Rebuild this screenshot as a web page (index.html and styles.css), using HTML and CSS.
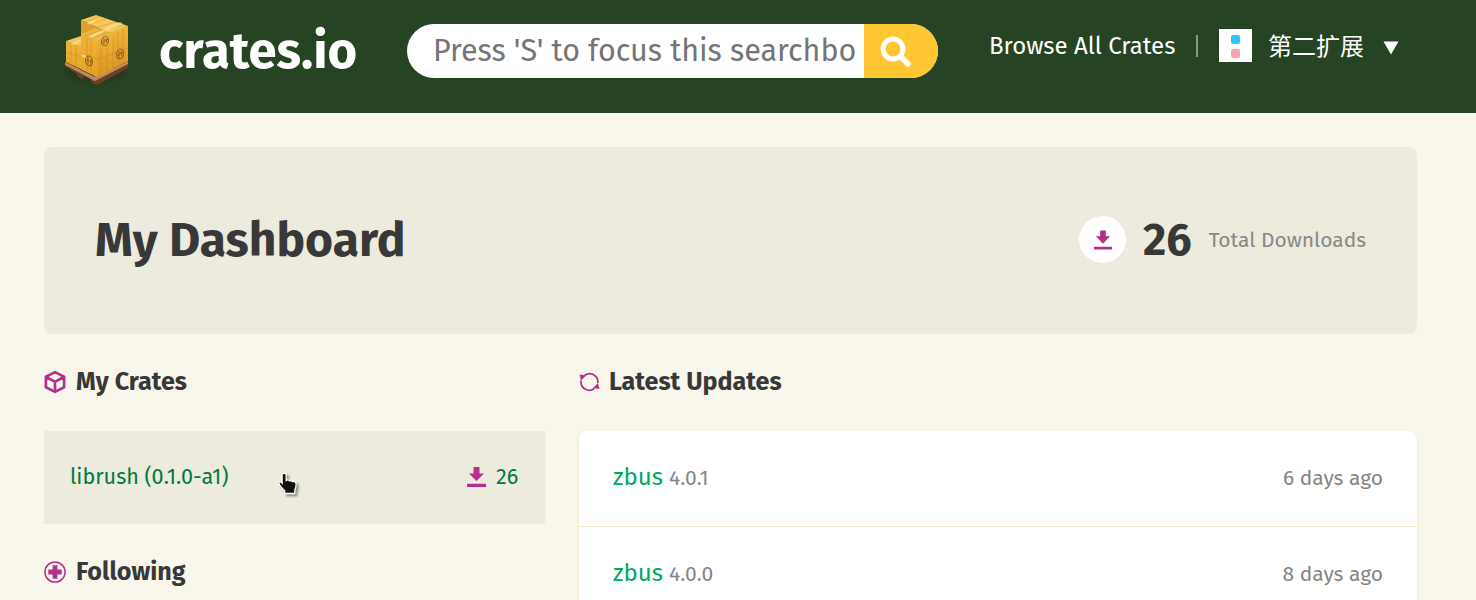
FILE: index.html
```html
<!DOCTYPE html>
<html lang="en">
<head>
<meta charset="utf-8">
<title>My Dashboard - crates.io</title>
<link rel="stylesheet" href="styles.css">
</head>
<body>
<header class="header">
  <a class="brand">
    <svg class="brand-logo" width="70" height="76" viewBox="0 0 70 76">
      <defs>
        <linearGradient id="wood" x1="0" y1="0" x2="0" y2="1"><stop offset="0" stop-color="#f0b43a"/><stop offset="1" stop-color="#e5a128"/></linearGradient>
        <linearGradient id="side" x1="0" y1="0" x2="0" y2="1"><stop offset="0" stop-color="#f0b63e"/><stop offset="1" stop-color="#d9941f"/></linearGradient>
        <filter id="soft" x="-30%" y="-60%" width="160%" height="220%"><feGaussianBlur stdDeviation="2"/></filter>
      </defs>
      <path d="M1 58 32 70 62 56 60 62 32 72 4 63z" fill="#14280f" opacity=".5" filter="url(#soft)"/>
      <path d="M2 51 32 66 65 50V56L34 73 31 72 28 70 27 67 21 64 20 67 15 65 14 62 2 54z" fill="#6b4022"/>
      <path d="M2 50 32 65 65 49v3L32 69 2 53z" fill="#c08a5c"/>
      <path d="M3 29 18 24 30 30 18 35z" fill="#f6c85c"/>
      <path d="M3 29 19 35 32 42V64L3 50z" fill="url(#wood)"/>
      <path d="M18 8 33 3 65 14 48 22z" fill="#f5c85c"/>
      <path d="M18 8 48 22V45L18 34z" fill="#e0a02c"/>
      <path d="M48 20 65 14V49L32 65V26z" fill="url(#side)"/>
      <path d="M18 22 33 16 50 23 34 30z" fill="#edb743"/>
      <path d="M18 22 34 29V65L18 57z" fill="url(#wood)"/>
      <path d="M34 29 50 22V57L34 65z" fill="url(#side)"/>
      <path d="M22 10 38 4M27 12 43 7M34 15 53 10M40 18 59 13M22 24 39 18M26 27 43 21M18 41 34 47 50 42 65 36M3 40 18 45M50 24V56M55 20V53M60 17V51M38 28V62M44 26V59M24 27V59M28 28V61M8 33V51M13 34V54" fill="none" stroke="#bd7716" stroke-width=".7" opacity=".45"/>
      <path d="M24 11 32 8 34 9 26 13zM25 24 42 17 45 18 29 26zM41 16 57 10 60 12 45 18zM8 32 15 28 18 29 12 33zM19 42 24 44 24 47 19 45z" fill="#ffe08d" opacity=".7"/>
      <g fill="none" stroke="#7d5216" stroke-width="1" opacity=".8"><ellipse cx="42" cy="29" rx="3.400" ry="4.800" transform="rotate(15 42 29)"/><path d="M39 31l6-4M41 26v7M43 26l1 5"/><ellipse cx="57" cy="42" rx="3.500" ry="5" transform="rotate(15 57 42)"/><path d="M54 44l6-4M56 39v7M58 39l1 5"/><ellipse cx="26" cy="49" rx="3.400" ry="5" transform="rotate(-15 26 49)"/><path d="M23 47l6 4M25 45v8M28 47v6"/></g>
    </svg>
    <span class="brand-name">crates.io</span>
  </a>
  <form class="search">
    <div class="search-input"><span class="search-text">Press 'S' to focus this searchbo</span></div>
    <div class="search-button">
      <svg width="32" height="32" viewBox="0 0 32 32" fill="none" stroke="#fff"><circle cx="13" cy="13" r="10" stroke-width="4.800"/><path d="M20.500 20.500 28 28" stroke-width="5.400" stroke-linecap="round"/></svg>
    </div>
  </form>
  <nav class="nav">
    <span class="browse">Browse All Crates</span>
    <span class="divider"></span>
    <svg class="avatar" width="33" height="33" viewBox="0 0 33 33"><path fill="#fff" d="M0 0h33v33H0z"/><rect x="12" y="6" width="9" height="9" rx="2" fill="#2ec5ff"/><rect x="12" y="20" width="9" height="9" rx="2" fill="#f9a3b4"/></svg>
    <span class="user">第二扩展</span>
    <svg class="caret" width="16" height="14" viewBox="0 0 16 14"><path d="M.5.5h15L8 13.500z" fill="#fff"/></svg>
  </nav>
</header>
<main class="main">
  <section class="hero">
    <h1 class="title">My Dashboard</h1>
    <div class="stats">
      <span class="stat-icon"><svg width="18" height="20" viewBox="0 0 19 20" fill="#b5308d"><path d="M6.500 0h6v6h4.500L9.500 14 2 6h4.500zM0 17h19v3H0z"/></svg></span>
      <span class="stat-num">26</span>
      <span class="stat-label">Total Downloads</span>
    </div>
  </section>
  <div class="columns">
    <aside class="side">
      <h2 class="heading">
        <svg class="heading-icon" width="22" height="24" viewBox="0 0 23 24" fill="none" stroke="#b5308d" stroke-width="2.800" stroke-linejoin="round"><path d="M11.500 1.700 21 6.500v11L11.500 22.300 2 17.500v-11zM2 6.800l9.500 5 9-5M11.500 11.800V22"/></svg>
        <span>My Crates</span>
      </h2>
      <a class="crate">
        <span class="crate-name">librush (0.1.0-a1)</span>
        <svg class="crate-icon" width="19" height="20" viewBox="0 0 19 20" fill="#b5308d"><path d="M6.500 0h6v6.500H17L9.500 14 2 6.500h4.500zM0 16.800h19V20H0z"/></svg>
        <span class="crate-count">26</span>
        <svg class="pointer" width="24" height="27" viewBox="0 0 24 27"><path d="M6 2.200c1.600 0 2.200 1 2.200 2.200v5c1-.8 2.500-.6 3.200.5 1-.7 2.400-.4 3 .7 1.300-.7 3.700.1 3.700 2.500 0 3-.6 4.500-1.300 6V22.500H6.700v-2.800C4 17.500 2.500 15 1 13c-.8-1.500 1-2.800 2.500-1.500l.6.700V4.400C4.100 3.200 4.600 2.200 6 2.200z" fill="#111" stroke="#fff" stroke-width="1.300"/></svg>
      </a>
      <h2 class="heading">
        <svg class="heading-icon" width="22" height="24" viewBox="0 0 23 24"><circle cx="11.500" cy="12" r="10.500" fill="none" stroke="#b5308d" stroke-width="1.600"/><path d="M9 5h5v4.500h4.500v5H14V19H9v-4.500H4.500v-5H9z" fill="#b5308d"/></svg>
        <span>Following</span>
      </h2>
    </aside>
    <section class="feed">
      <h2 class="heading">
        <svg class="heading-icon" width="21" height="20" viewBox="0 0 21 20"><path d="M5.500 3.500A8.300 8.300 0 0 1 18.800 11M15.500 16.500A8.300 8.300 0 0 1 2.200 8.500" fill="none" stroke="#b5308d" stroke-width="1.700"/><path d="M.5 2.500 7 3.500 2 8.500zM20.500 17 14 16l5-5z" fill="#b5308d"/></svg>
        <span>Latest Updates</span>
      </h2>
      <div class="updates">
        <div class="update"><span class="pkg">zbus</span><span class="version">4.0.1</span><span class="date">6 days ago</span></div>
        <div class="update"><span class="pkg">zbus</span><span class="version">4.0.0</span><span class="date">8 days ago</span></div>
      </div>
    </section>
  </div>
</main>
</body>
</html>
```
FILE: styles.css
```css
* { box-sizing: border-box; }
body {
  margin: 0;
  height: 600px;
  overflow: hidden;
  background: #f9f7ec;
  color: #383838;
  font-family: "Fira Sans", "Noto Sans", "Noto Sans CJK SC", sans-serif;
  white-space: nowrap;
}
h1, h2 { margin: 0; }
svg { display: block; flex: none; }

.header { display: flex; align-items: flex-start; height: 113px; background: #264323; color: #fff; }
.brand { display: flex; width: 407px; padding: 12px 0 0 63px; }
.brand-name { margin-left: 26px; font-size: 50.800px; font-weight: 700; line-height: 79px; }
.search { display: flex; width: 531px; height: 54px; margin-top: 24px; border-radius: 27px; overflow: hidden; background: #fff; }
.search-input { width: 457px; padding-left: 26px; color: #757575; font-size: 30.500px; line-height: 53px; overflow: hidden; }
.search-button { width: 74px; padding: 12px 0 0 16px; background: #ffc832; }
.nav { display: flex; align-items: center; height: 34px; margin: 28px 0 0 51px; font-size: 24px; }
.browse { width: 207px; padding-top: 2px; line-height: 34px; }
.divider { width: 2px; height: 22px; margin-top: 2px; background: #8b9887; }
.avatar { margin-left: 21px; }
.user { width: 98px; margin-left: 16px; font-family: "Noto Sans CJK SC", sans-serif; font-size: 24px; line-height: 34px; font-weight: 400; }
.caret { margin: 5px 0 0 17px; }

.main { padding: 34px 59px 0 44px; }
.hero { display: flex; align-items: center; justify-content: space-between; height: 187px; padding: 0 51px 2px; border-radius: 8px; background: #edebde; }
.title { font-size: 48px; font-weight: 700; line-height: 60px; }
.stats { display: flex; align-items: center; width: 287px; }
.stat-icon { display: flex; flex: none; align-items: center; justify-content: center; width: 47px; height: 47px; border-radius: 50%; background: #fff; }
.stat-num { width: 66px; margin-left: 17px; font-size: 45px; font-weight: 700; line-height: 50px; }
.stat-label { font-size: 21px; color: #888; }

.columns { display: flex; gap: 34px; }
.side { width: 501px; }
.feed { flex: 1; }
.heading { display: flex; align-items: center; height: 97px; padding-bottom: 1px; font-size: 25.100px; font-weight: 700; }
.heading-icon { margin: 0 10px 0 0; }
.feed .heading-icon { margin-right: 9px; }
.crate { position: relative; display: flex; align-items: center; height: 93px; padding: 0 26px 2px; background: #edebde; color: #007940; font-size: 21.600px; }
.crate-name { flex: 1; }
.crate-icon { margin-right: 10px; }
.crate-count { width: 23px; }
.pointer { position: absolute; left: 234px; top: 40px; filter: drop-shadow(2px 2px 1px rgba(0, 0, 0, .4)); }
.updates { border-radius: 8px 8px 0 0; background: #fff; box-shadow: 0 1px 3px #eedfa5; }
.update { display: flex; align-items: baseline; height: 96px; padding: 30px 34px 0; border-bottom: 1px solid #f0e8c8; color: #858585; font-size: 21px; }
.pkg { width: 56px; color: #00ac5b; font-size: 24px; line-height: 33px; }
.version { flex: 1; }
```
